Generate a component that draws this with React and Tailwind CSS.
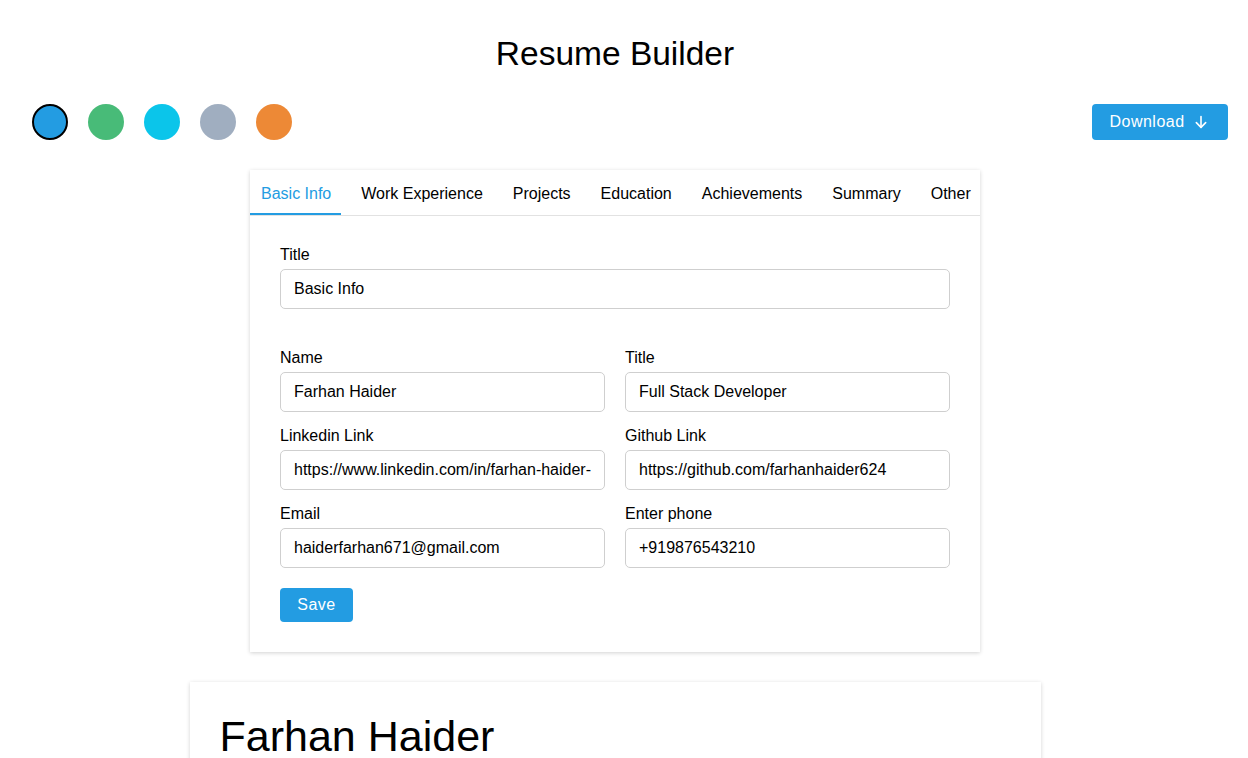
import { useState } from 'react';

const COLORS = ['#239ce2', '#48bb78', '#0bc5ea', '#a0aec0', '#ed8936'];

const TABS = ['Basic Info', 'Work Experience', 'Projects', 'Education', 'Achievements', 'Summary', 'Other'];

function Field({ label, value }) {
  return (
    <div className="flex flex-col">
      <label className="text-[16px] leading-[18px] text-black mb-[5px]">{label}</label>
      <input
        className="h-[40px] w-full rounded-[5px] border border-[#cfcfcf] px-[13px] text-[16px] text-black outline-none"
        defaultValue={value}
      />
    </div>
  );
}

export default function App() {
  const [color, setColor] = useState(0);
  const [tab, setTab] = useState(0);

  return (
    <div className="min-h-screen bg-white text-black" style={{ fontFamily: '"Liberation Sans", Arial, sans-serif' }}>
      <div className="w-[1230px]">
        <h1 className="pt-[34px] text-center text-[33.5px] leading-[40px]">Resume Builder</h1>
      </div>

      <div className="mt-[30px] flex items-center justify-between px-[20px]">
        <div className="flex gap-[20px] pl-[12px]">
          {COLORS.map((c, i) => (
            <button
              key={c}
              onClick={() => setColor(i)}
              className={'h-[36px] w-[36px] rounded-full ' + (color === i ? 'border-2 border-black' : '')}
              style={{ backgroundColor: c }}
            />
          ))}
        </div>
        <button className="flex h-[36px] w-[136px] items-center justify-center gap-[8px] rounded-[4px] bg-[#239ce2] pr-[2px] text-[16px] tracking-[0.5px] text-white">
          Download
          <svg width="16" height="16" viewBox="0 0 24 24" fill="none" stroke="currentColor" strokeWidth="2.4" strokeLinecap="round" strokeLinejoin="round">
            <path d="M12 4v16" />
            <path d="M5 13l7 7 7-7" />
          </svg>
        </button>
      </div>

      <div className="w-[1230px]">
        <div className="mx-auto mt-[30px] w-[730px] bg-white shadow-[0_1px_4px_rgba(0,0,0,0.18)]">
          <div className="flex border-b border-[#e2e2e2]">
            {TABS.map((t, i) => (
              <button
                key={t}
                onClick={() => setTab(i)}
                className={
                  'mr-[9px] h-[45px] whitespace-nowrap pt-[5px] pl-[11px] pr-[10px] text-[16px] ' +
                  (tab === i ? 'border-b-2 border-[#239ce2] text-[#239ce2]' : 'border-b-2 border-transparent text-black')
                }
              >
                {t}
              </button>
            ))}
          </div>

          <div className="p-[30px]">
            <Field label="Title" value="Basic Info" />

            <div className="mt-[40px] grid grid-cols-2 gap-x-[20px] gap-y-[15px]">
              <Field label="Name" value="Farhan Haider" />
              <Field label="Title" value="Full Stack Developer" />
              <Field label="Linkedin Link" value="https://www.linkedin.com/in/farhan-haider-624" />
              <Field label="Github Link" value="https://github.com/farhanhaider624" />
              <Field label="Email" value="haiderfarhan671@gmail.com" />
              <Field label="Enter phone" value="+919876543210" />
            </div>

            <button className="mt-[20px] h-[34px] w-[73px] rounded-[4px] bg-[#239ce2] text-[16px] tracking-[0.5px] text-white">
              Save
            </button>
          </div>
        </div>

        <div className="mx-auto mt-[30px] w-[851px] bg-white px-[30px] pt-[30px] pb-[40px] shadow-[0_1px_4px_rgba(0,0,0,0.18)]">
          <h2 className="text-[43px] leading-[48px]">Farhan Haider</h2>
        </div>
      </div>
    </div>
  );
}
